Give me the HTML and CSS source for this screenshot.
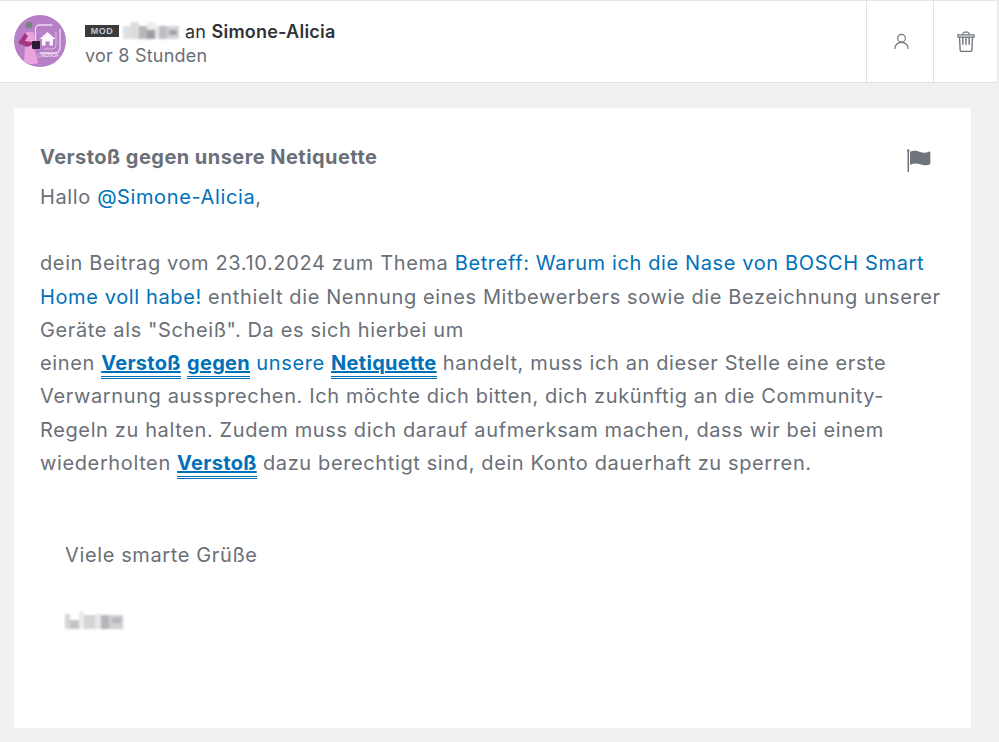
FILE: index.html
```
<!DOCTYPE html>
<html lang="de">
<head>
<meta charset="utf-8">
<title>Verstoß gegen unsere Netiquette</title>
<link rel="stylesheet" href="styles.css">
</head>
<body>
<header class="topbar">
  <svg class="avatar" width="52" height="52" viewBox="0 0 52 52" aria-hidden="true">
    <circle cx="26" cy="26" r="26" fill="#b67fc6"/>
    <path d="M21.500 26V14a4 4 0 0 1 4-4h13" fill="none" stroke="#ecdcf1" stroke-width="1.300"/>
    <path d="M46 14v19a5 5 0 0 1-5 5H26" fill="none" stroke="#ecdcf1" stroke-width="1.300"/>
    <path d="M42 17v13a4 4 0 0 1-4 4H30" fill="none" stroke="#d9bde2" stroke-width="1"/>
    <path d="M25.500 24l8-7 8 7h-2.500v6.500h-3.500v-4h-4v4h-3.500V24z" fill="#fbf6fc"/>
    <path d="M11 18c3-2 6-2 9 0l1 8-2 4 3 9 2 9c-5 2-10 1-14-1l1-16-1-5z" fill="#e9a4dd"/>
    <path d="M11 18l-7 10 9 4 5-2v-3l-7-1 3-5z" fill="#a4357f"/>
    <circle cx="15" cy="10" r="3.300" fill="#77857f"/>
    <rect x="18" y="26" width="8" height="8" rx="1" fill="#2a1b2e"/>
    <text class="avatar-brand" x="28" y="42">BOSCH</text>
    <circle cx="25.500" cy="40.500" r="1.800" fill="none" stroke="#f0e0f3" stroke-width=".5"/>
  </svg>
  <div class="who">
    <div class="who-line">
      <span class="badge">MOD</span>
      <svg class="mosaic" width="56" height="18" viewBox="0 0 56 18" aria-hidden="true">
        <rect x="0" y="4" width="8" height="13" fill="#dfe0e2"/>
        <rect x="8" y="0" width="8" height="17" fill="#dbdcde"/>
        <rect x="16" y="4" width="8" height="13" fill="#b5b7ba"/>
        <rect x="24" y="8" width="8" height="9" fill="#9c9ea2"/>
        <rect x="24" y="0" width="8" height="8" fill="#eceded"/>
        <rect x="32" y="4" width="4" height="13" fill="#e8e8ea"/>
        <rect x="36" y="4" width="8" height="13" fill="#bdbfc2"/>
        <rect x="44" y="4" width="12" height="13" fill="#d4d5d7"/>
        <rect x="46" y="8" width="8" height="5" fill="#a3a5a9"/>
      </svg>
      <span class="to">an <strong>Simone-Alicia</strong></span>
    </div>
    <div class="when">vor 8 Stunden</div>
  </div>
  <div class="action">
    <svg class="icon-user" width="15" height="17" viewBox="0 0 18 20" aria-hidden="true" fill="none" stroke="#6f747b" stroke-width="1.400">
      <circle cx="9" cy="6" r="4.600"/>
      <path d="M1 19c.4-5 3.400-8 8-8s7.600 3 8 8"/>
    </svg>
  </div>
  <div class="action action-last">
    <svg width="18" height="22" viewBox="0 0 20 24" aria-hidden="true" fill="none" stroke="#6f747b" stroke-width="1.500">
      <path d="M1 6.500V4h18v2.500z" stroke-width="1.300"/>
      <path d="M6.500 4V2.500L8 1h4l1.500 1.500V4" stroke-width="1.300"/>
      <path d="M2.800 6.500 3.500 21a1.500 1.500 0 0 0 1.500 1.400h10a1.500 1.500 0 0 0 1.500-1.400l.7-14.500"/>
      <path d="M6.500 6.500V15M10 6.500V15M13.500 6.500V15" stroke-width="1.600"/>
    </svg>
  </div>
</header>
<main class="content">
  <article class="card">
    <div class="title-row">
      <h1 class="title">Verstoß gegen unsere Netiquette</h1>
      <svg class="flag" width="26" height="24" viewBox="0 0 26 24" aria-hidden="true">
        <rect x="0.500" y="1" width="1.500" height="22" fill="#6f747b"/>
        <circle cx="1.250" cy="1.600" r="1.300" fill="#6f747b"/>
        <path d="M3 3c4-2 7-1 10 0s6 1 9.500-.5c.5 0 .8 0 .8 .5V15c-3 2-7 1.500-10 .3S7 14 3 16z" fill="#6f747b"/>
      </svg>
    </div>
    <div class="body">
      <p class="para">Hallo <a class="link" href="#">@Simone-Alicia</a>,</p>
      <p class="para">dein Beitrag vom 23.10.2024 zum Thema <a class="link" href="#">Betreff: Warum ich die Nase von BOSCH Smart<br>Home voll habe!</a> enthielt die Nennung eines Mitbewerbers sowie die Bezeichnung unserer<br>Geräte als "Scheiß". Da es sich hierbei um<br>einen <a class="kw" href="#">Verstoß</a> <a class="kw" href="#">gegen</a> <a class="link" href="#">unsere</a> <a class="kw" href="#">Netiquette</a> handelt, muss ich an dieser Stelle eine erste<br>Verwarnung aussprechen. Ich möchte dich bitten, dich zukünftig an die Community-<br>Regeln zu halten. Zudem muss dich darauf aufmerksam machen, dass wir bei einem<br>wiederholten <a class="kw" href="#">Verstoß</a> dazu berechtigt sind, dein Konto dauerhaft zu sperren.</p>
      <div class="signoff">
        <p class="para">Viele smarte Grüße</p>
        <svg class="mosaic" width="58" height="18" viewBox="0 0 58 18" aria-hidden="true">
          <rect x="0" y="3" width="5" height="15" fill="#d5d6d8"/>
          <rect x="5" y="9" width="9" height="9" fill="#c2c4c7"/>
          <rect x="14" y="0" width="5" height="18" fill="#ebebec"/>
          <rect x="19" y="4" width="11" height="14" fill="#d4d5d7"/>
          <rect x="30" y="3" width="6" height="15" fill="#e8e8ea"/>
          <rect x="36" y="4" width="8" height="14" fill="#b4b6b9"/>
          <rect x="44" y="4" width="14" height="14" fill="#cdcfd2"/>
          <rect x="47" y="7" width="9" height="5" fill="#b4b6b9"/>
        </svg>
      </div>
    </div>
  </article>
</main>
</body>
</html>
```
FILE: styles.css
```
* { box-sizing: border-box; }
html, body { margin: 0; padding: 0; }
body {
  width: 998px;
  height: 742px;
  overflow: hidden;
  background: #eff1f2;
  font-family: Inter, "Noto Sans", sans-serif;
  color: #6a7078;
}
.topbar {
  display: flex;
  align-items: stretch;
  height: 83px;
  background: #fff;
  border-top: 1px solid #e4e6e9;
  border-bottom: 1px solid #dfe2e5;
  border-right: 1px solid #e4e6e9;
  padding-left: 14px;
}
.avatar { align-self: center; flex: none; margin-top: -1px; }
.avatar-brand { font: 700 4.500px "Liberation Sans", sans-serif; fill: #f0e0f3; }
.who { flex: 1; padding: 17px 0 0 19px; }
.who-line { display: flex; align-items: center; height: 26px; font-size: 18px; color: #2f3338; letter-spacing: .23px; }
.badge {
  width: 34px;
  height: 12px;
  background: #3a3b3d;
  color: #c4c6c8;
  font: bold 9px/12px "Liberation Sans", sans-serif;
  letter-spacing: .5px;
  text-align: center;
  margin-right: 4px;
}
.mosaic { display: block; filter: blur(1px); }
.to { margin-left: 6px; }
.to strong { font-weight: 600; }
.when { font-size: 18px; line-height: 24px; letter-spacing: .23px; }
.action {
  width: 67px;
  display: flex;
  align-items: center;
  justify-content: center;
  border-left: 1px solid #dfe2e5;
}
.action-last { width: 64px; }
.icon-user { margin: 0 0 0 3px; }
.content { padding: 25px 27px 0 14px; }
.card {
  height: 620px;
  background: #fff;
  padding: 33px 26px 0;
}
.title-row { display: flex; justify-content: space-between; margin-bottom: 7px; }
.title {
  margin: 0;
  font-size: 20px;
  line-height: 33px;
  font-weight: 700;
  letter-spacing: .45px;
  color: #6a7078;
}
.flag { margin: 8px 12px 0 0; }
.body { font-size: 20px; line-height: 33.300px; letter-spacing: .62px; white-space: nowrap; }
.para { margin: 0 0 33px; }
.link { color: #0071b9; text-decoration: none; }
.kw {
  color: #0071b9;
  font-weight: 700;
  letter-spacing: .3px;
  border-bottom: 3px double #0071b9;
  padding-bottom: 1px;
}
.signoff { padding: 26px 0 0 25px; }
.signoff .para { margin-bottom: 38px; }
```
